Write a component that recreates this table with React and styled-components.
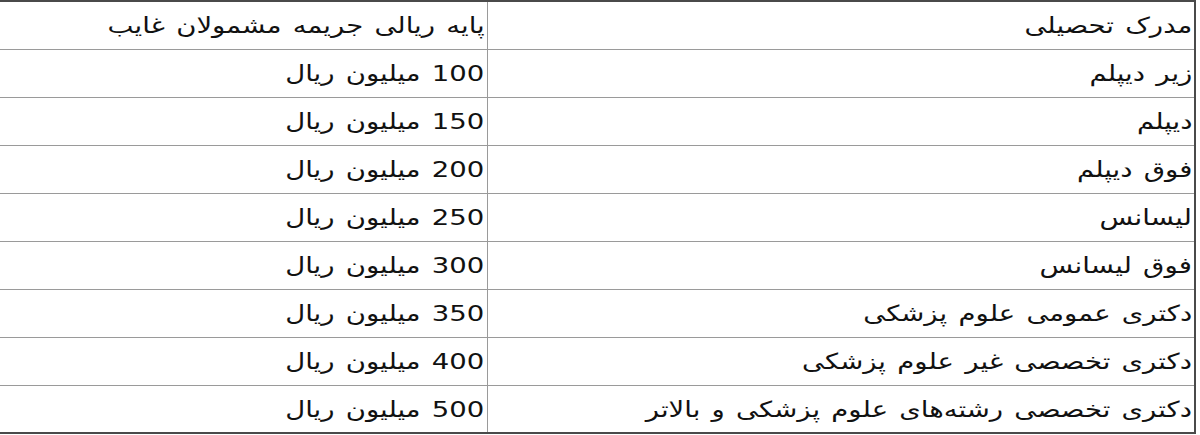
import React from "react"
import styled, { createGlobalStyle } from "styled-components"

const GlobalStyle = createGlobalStyle`
html, body {
    margin: 0;
    padding: 0;
    background: #ffffff;
}
body {
    font-family: "DejaVu Sans", Tahoma, sans-serif;
    overflow: hidden;
}
`

const Page = styled.div`
width: 1200px;
height: 435px;
overflow: hidden;
background: #fff;
`

const Table = styled.table`
direction: rtl;
width: 1196px;
margin-left: -2px;
border-collapse: collapse;
border: 2px solid #4a4a4a;
table-layout: fixed;
`

const Row = styled.tr`
height: 48px;
`

const Cell = styled.td`
padding: 1px 2px 0 2px;
border: 1px solid #9a9a9a;
text-align: right;
vertical-align: middle;
font-size: 22px;
color: #111;
white-space: nowrap;
overflow: hidden;
`

const Label = styled.span`
display: inline-block;
transform: scaleX(1.25);
transform-origin: right center;
word-spacing: 2px;
`

const rows = [
    ["مدرک تحصیلی", "پایه ریالی جریمه مشمولان غایب"],
    ["زیر دیپلم", "100 میلیون ریال"],
    ["دیپلم", "150 میلیون ریال"],
    ["فوق دیپلم", "200 میلیون ریال"],
    ["لیسانس", "250 میلیون ریال"],
    ["فوق لیسانس", "300 میلیون ریال"],
    ["دکتری عمومی علوم پزشکی", "350 میلیون ریال"],
    ["دکتری تخصصی غیر علوم پزشکی", "400 میلیون ریال"],
    ["دکتری تخصصی رشته‌های علوم پزشکی و بالاتر", "500 میلیون ریال"],
]

export default function App() {
    return <Page>
        <GlobalStyle />
        <Table>
            <colgroup>
                <col style={{ width: 708 }} />
                <col style={{ width: 488 }} />
            </colgroup>
            <tbody>
                {rows.map(([degree, fine]) => (
                    <Row key={degree}>
                        <Cell><Label>{degree}</Label></Cell>
                        <Cell><Label>{fine}</Label></Cell>
                    </Row>
                ))}
            </tbody>
        </Table>
    </Page>
}
